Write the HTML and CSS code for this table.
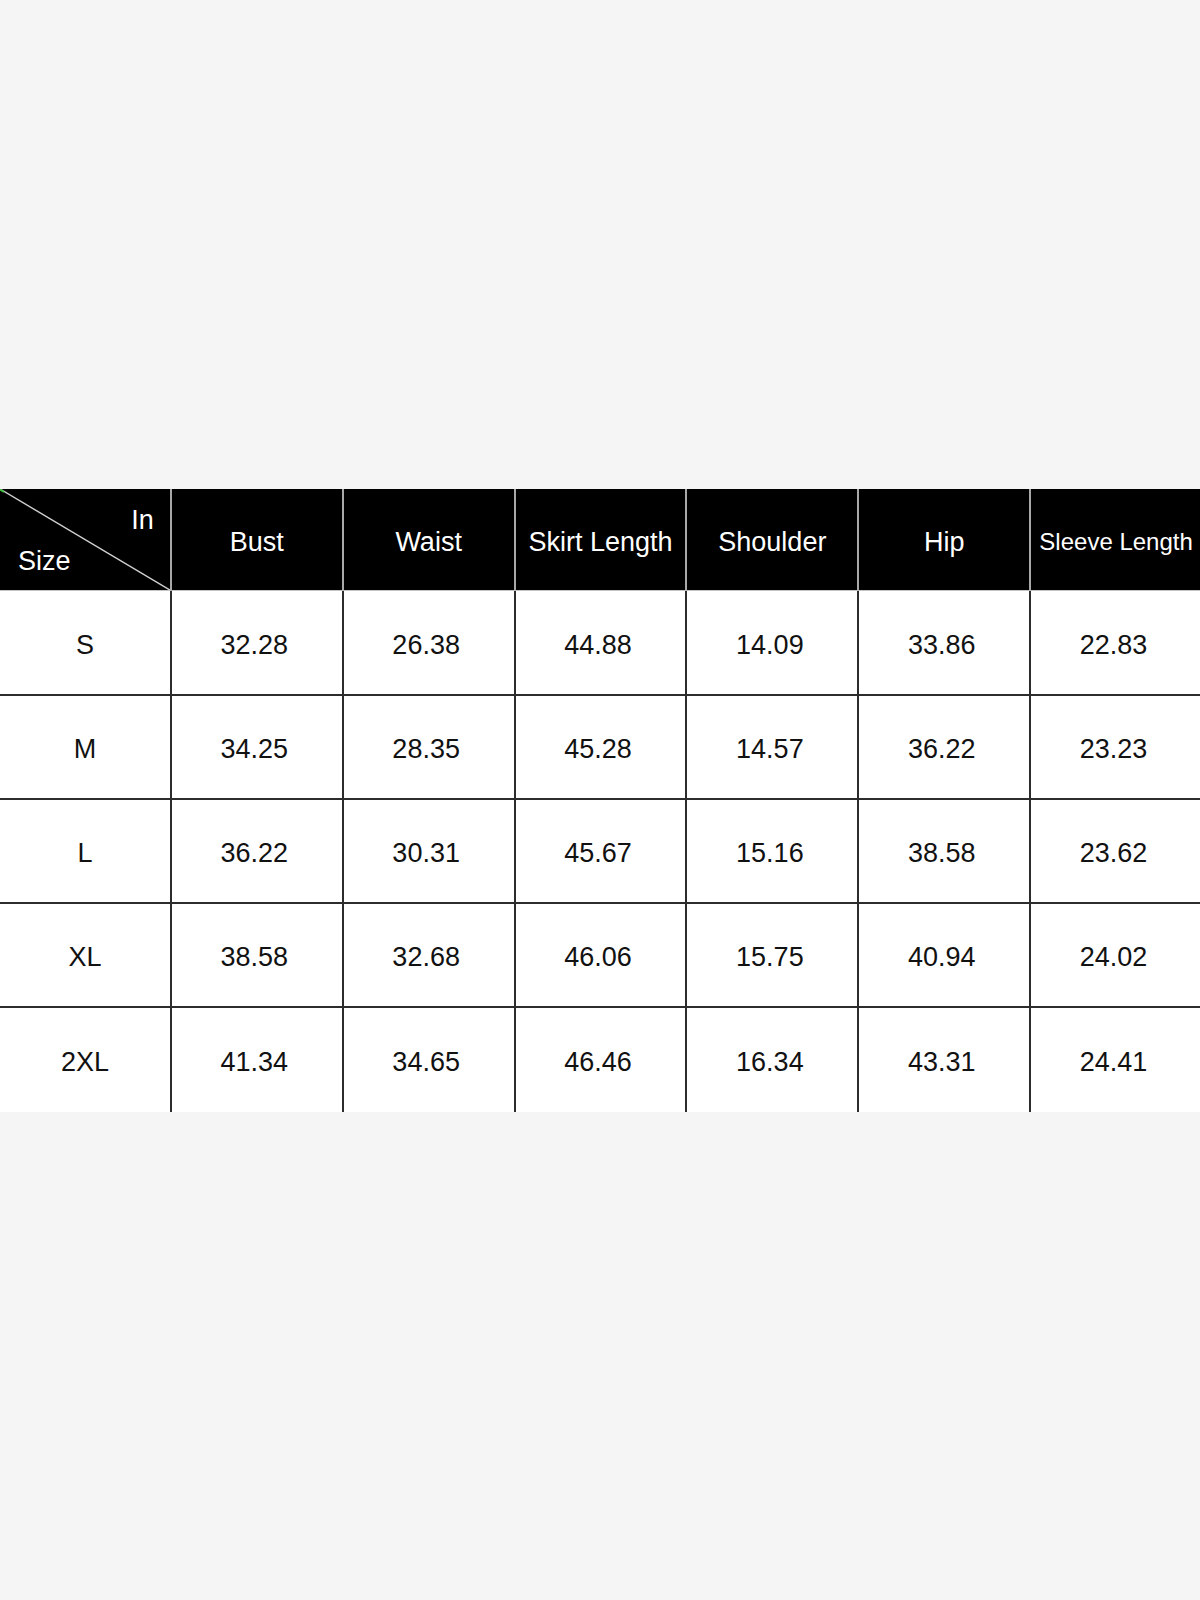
FILE: index.html
```html
<!DOCTYPE html>
<html lang="en">
<head>
<meta charset="utf-8">
<title>Size Chart</title>
<link rel="stylesheet" href="styles.css">
</head>
<body>
<div class="page">
  <div class="chart">
    <div class="grid">
      <div class="hcell corner">
        <svg class="diag" viewBox="0 0 170 101" preserveAspectRatio="none" aria-hidden="true">
          <line x1="0" y1="0" x2="170" y2="101" stroke="#d0d0d0" stroke-width="1.4"/>
          <line x1="0" y1="0.5" x2="4" y2="3" stroke="#3fbf3f" stroke-width="2"/>
        </svg>
        <span class="unit">In</span>
        <span class="sizelabel">Size</span>
      </div>
      <div class="hcell">Bust</div>
      <div class="hcell">Waist</div>
      <div class="hcell">Skirt Length</div>
      <div class="hcell">Shoulder</div>
      <div class="hcell">Hip</div>
      <div class="hcell small">Sleeve Length</div>

      <div class="cell size">S</div><div class="cell">32.28</div><div class="cell">26.38</div><div class="cell">44.88</div><div class="cell">14.09</div><div class="cell">33.86</div><div class="cell">22.83</div>
      <div class="cell size">M</div><div class="cell">34.25</div><div class="cell">28.35</div><div class="cell">45.28</div><div class="cell">14.57</div><div class="cell">36.22</div><div class="cell">23.23</div>
      <div class="cell size">L</div><div class="cell">36.22</div><div class="cell">30.31</div><div class="cell">45.67</div><div class="cell">15.16</div><div class="cell">38.58</div><div class="cell">23.62</div>
      <div class="cell size">XL</div><div class="cell">38.58</div><div class="cell">32.68</div><div class="cell">46.06</div><div class="cell">15.75</div><div class="cell">40.94</div><div class="cell">24.02</div>
      <div class="cell size last">2XL</div><div class="cell last">41.34</div><div class="cell last">34.65</div><div class="cell last">46.46</div><div class="cell last">16.34</div><div class="cell last">43.31</div><div class="cell last">24.41</div>
    </div>
  </div>
</div>
</body>
</html>
```

FILE: styles.css
```css
html, body {
  margin: 0;
  padding: 0;
  background: #f5f5f5;
  overflow: hidden;
}

body {
  font-family: "Liberation Sans", Arial, Helvetica, sans-serif;
}

.page {
  padding-top: 489px;
}

.chart {
  width: 1200px;
  overflow: hidden;
}

.grid {
  display: grid;
  grid-template-columns: repeat(7, 171.86px);
  grid-template-rows: 102px 105px 104px 104px 104px 104px;
  width: 1203px;
  background: #ffffff;
}

.hcell {
  box-sizing: border-box;
  background: #000000;
  color: #ffffff;
  font-size: 27px;
  display: flex;
  align-items: center;
  justify-content: center;
  padding-top: 5px;
  border-right: 2px solid #a8a8a8;
  border-bottom: 1px solid #c4c4c4;
  white-space: nowrap;
}

.hcell.small {
  font-size: 24px;
}

.corner {
  position: relative;
  flex-direction: column;
  align-items: stretch;
  justify-content: space-between;
  padding: 18px 16px 15px 18px;
}

.diag {
  position: absolute;
  left: 0;
  top: 0;
  width: 100%;
  height: 100%;
}

.unit,
.sizelabel {
  position: relative;
  line-height: 27px;
}

.unit {
  align-self: flex-end;
}

.sizelabel {
  align-self: flex-start;
}

.cell {
  box-sizing: border-box;
  color: #111111;
  font-size: 27px;
  display: flex;
  align-items: center;
  justify-content: center;
  padding-top: 5px;
  padding-right: 5px;
  border-right: 2px solid #2c2c2c;
  border-bottom: 2px solid #2c2c2c;
}

.cell.size {
  padding-right: 0;
}

.cell.last {
  border-bottom: none;
}
```
